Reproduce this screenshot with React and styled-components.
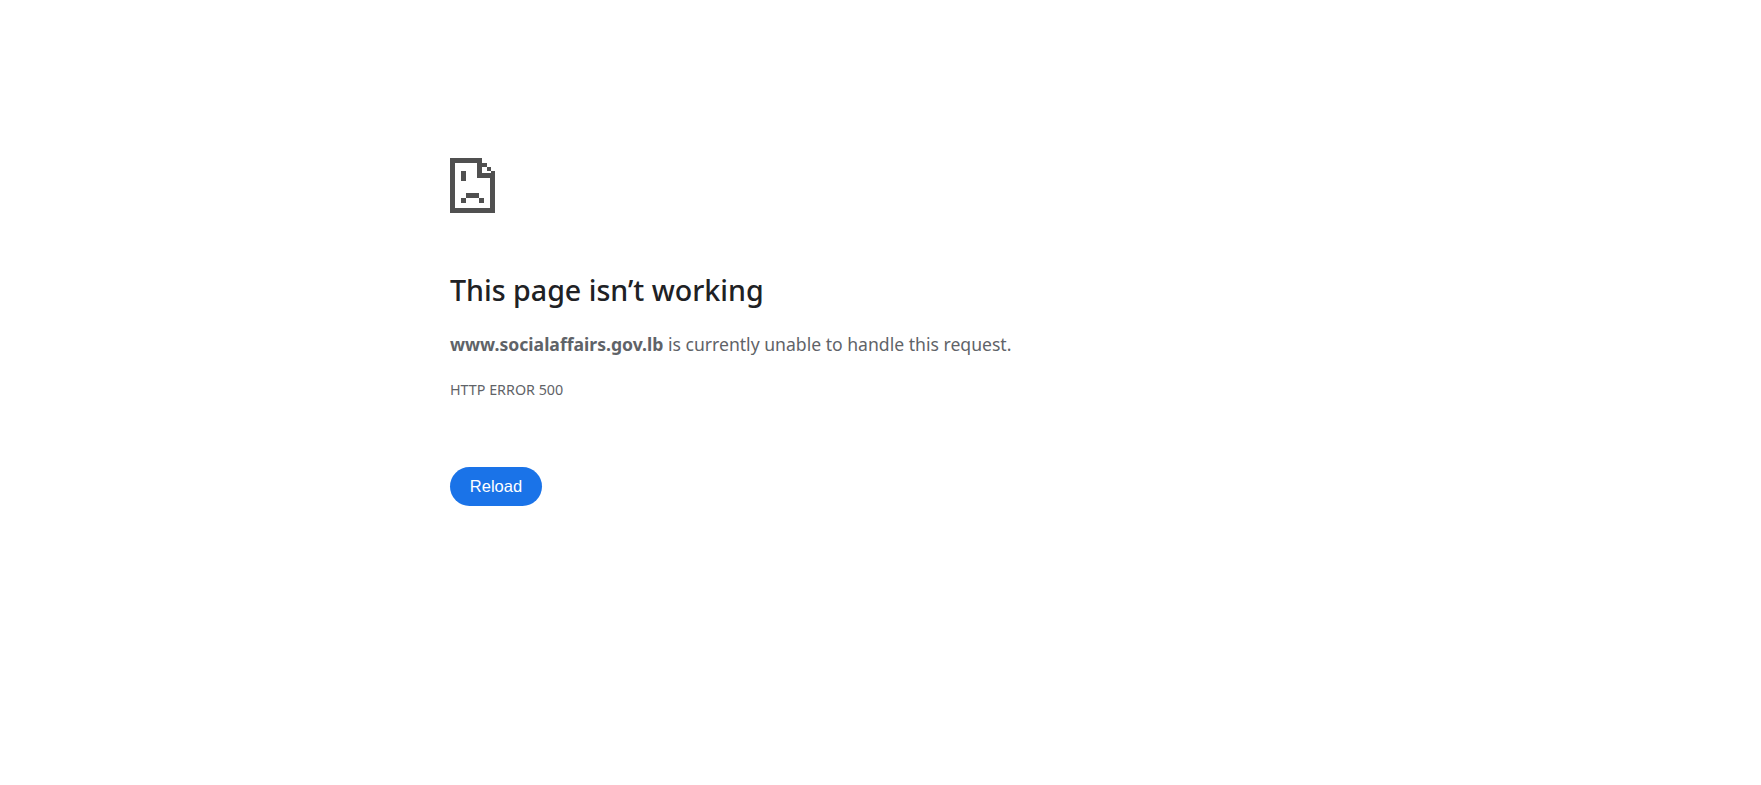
import React from "react";
import styled, { createGlobalStyle } from "styled-components";

const Global = createGlobalStyle`
  html, body { margin: 0; padding: 0; background: #fff; }
  body { width: 1761px; height: 785px; overflow: hidden; font-family: "Noto Sans", sans-serif; }
`;

const Page = styled.main`
  display: flex;
  flex-direction: column;
  align-items: flex-start;
  padding: 158px 0 0 450px;
`;

const Icon = styled.svg`
  display: block;
  width: 46px;
  height: 55px;
  margin-bottom: 59px;
`;

const Heading = styled.h1`
  margin: 0 0 23px;
  font-size: 28.6px;
  line-height: 36px;
  font-weight: 500;
  color: #202124;
`;

const Message = styled.p`
  margin: 0 0 23px;
  font-size: 17.6px;
  line-height: 26px;
  color: #5f6368;
`;

const Strong = styled.strong`
  font-weight: 700;
  color: #5f6368;
`;

const Code = styled.div`
  font-size: 14.3px;
  line-height: 20px;
  color: #5f6368;
  margin-bottom: 67px;
`;

const Reload = styled.button`
  width: 92px;
  height: 39px;
  border: 0;
  border-radius: 20px;
  background: #1a73e8;
  color: #fff;
  font-family: "Liberation Sans", Arial, sans-serif;
  font-size: 16.5px;
  padding: 0;
`;

export default function App() {
  return (
    <>
      <Global />
      <Page>
        <Icon viewBox="0 0 46 55" fill="#505050" shapeRendering="crispEdges">
          <path d="M0 0H32V5H5V50H40V15H45V55H0Z" />
          <path d="M27 0H32V15H45V20H27Z" />
          <path d="M32 5H37V9H32ZM37 9H41V13H37ZM41 13H45V15H41Z" />
          <path d="M11 13H16V23H11ZM16 35H29V40H16ZM11 40H16V45H11ZM29 40H34V45H29Z" />
        </Icon>
        <Heading>This page isn’t working</Heading>
        <Message><Strong>www.socialaffairs.gov.lb</Strong> is currently unable to handle this request.</Message>
        <Code>HTTP ERROR 500</Code>
        <Reload>Reload</Reload>
      </Page>
    </>
  );
}
